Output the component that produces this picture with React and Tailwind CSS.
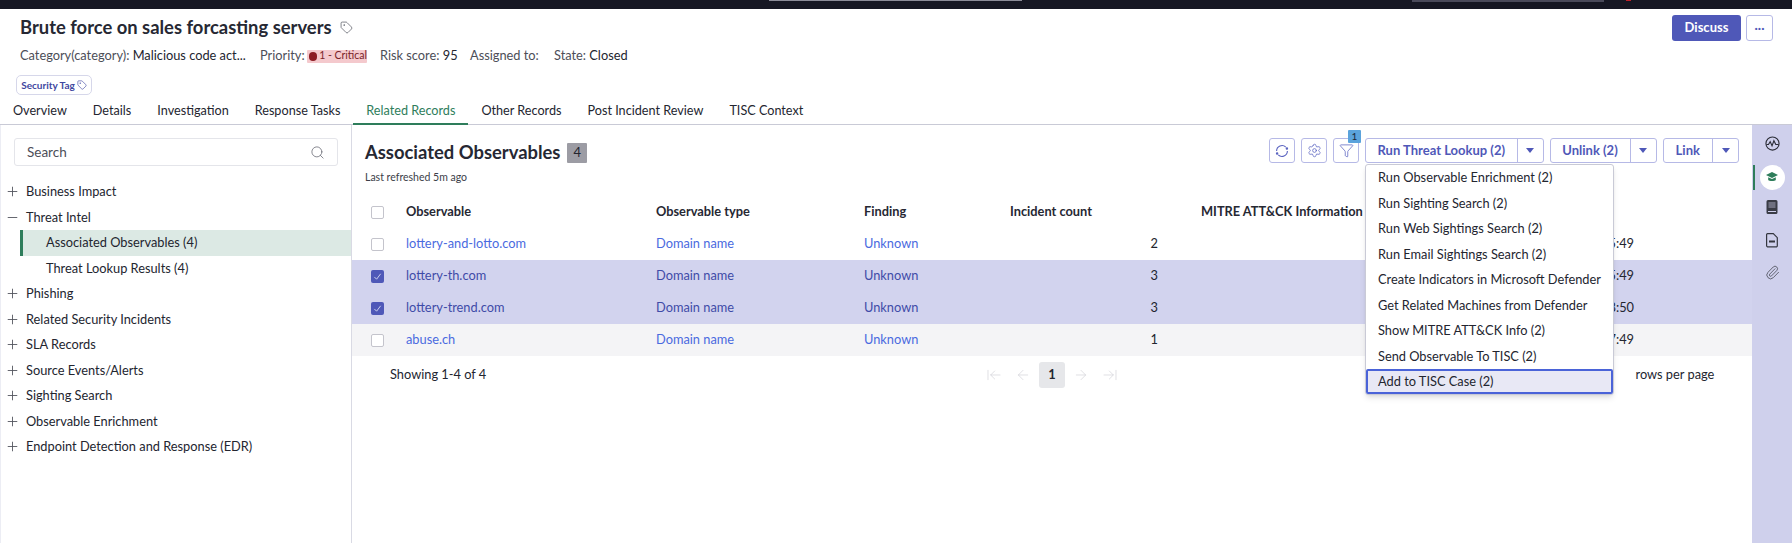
import {
  ArrowLeft,
  ArrowLeftToLine,
  ArrowRight,
  ArrowRightToLine,
  Filter,
  Minus,
  Paperclip,
  Plus,
  Search,
  Settings,
  Tag,
} from "lucide-react";

const tabs = ["Overview", "Details", "Investigation", "Response Tasks", "Related Records", "Other Records", "Post Incident Review", "TISC Context"];

const tree = [
  { label: "Business Impact", icon: "plus" },
  { label: "Threat Intel", icon: "minus" },
  { label: "Associated Observables (4)", child: true, active: true },
  { label: "Threat Lookup Results (4)", child: true },
  { label: "Phishing", icon: "plus" },
  { label: "Related Security Incidents", icon: "plus" },
  { label: "SLA Records", icon: "plus" },
  { label: "Source Events/Alerts", icon: "plus" },
  { label: "Sighting Search", icon: "plus" },
  { label: "Observable Enrichment", icon: "plus" },
  { label: "Endpoint Detection and Response (EDR)", icon: "plus" },
];

const rows = [
  { name: "lottery-and-lotto.com", count: 2, time: "5:49" },
  { name: "lottery-th.com", count: 3, time: "5:49", selected: true },
  { name: "lottery-trend.com", count: 3, time: "8:50", selected: true },
  { name: "abuse.ch", count: 1, time: "7:49", striped: true },
];

const menu = [
  "Run Observable Enrichment (2)",
  "Run Sighting Search (2)",
  "Run Web Sightings Search (2)",
  "Run Email Sightings Search (2)",
  "Create Indicators in Microsoft Defender",
  "Get Related Machines from Defender",
  "Show MITRE ATT&CK Info (2)",
  "Send Observable To TISC (2)",
];

const Checkbox = ({ checked }) =>
  checked ? (
    <span className="flex h-[13px] w-[13px] items-center justify-center rounded-[2px] bg-[#4f58b8]">
      <svg width="9" height="9" viewBox="0 0 10 10" fill="none" stroke="#d8daf2" strokeWidth="1">
        <path d="M1.5 5.5 4 8l4.5-6" />
      </svg>
    </span>
  ) : (
    <span className="h-[13px] w-[13px] rounded-[2px] border border-[#c4c4cc] bg-white" />
  );

const IconButton = ({ children }) => (
  <button className="flex h-[25px] w-[26px] items-center justify-center rounded-[3px] border border-[#b6b9e6] bg-white text-[#5a63c0]">
    {children}
  </button>
);

const SplitButton = ({ label, mainWidth, children }) => (
  <div className="relative flex h-[25px] rounded-[3px] border border-[#b6b9e6] bg-white text-[13px] font-bold whitespace-nowrap text-[#4f58b8]">
    <span className={`flex items-center justify-center border-r border-[#b6b9e6] ${mainWidth}`}>{label}</span>
    <span className="flex w-[25px] items-center justify-center">
      <span className="h-0 w-0 border-x-[4px] border-t-[5px] border-x-transparent border-t-[#4f58b8]" />
    </span>
    {children}
  </div>
);

export default function App() {
  return (
    <div className="flex h-screen flex-col overflow-hidden bg-white font-['Lato',sans-serif] text-[12.8px] whitespace-nowrap text-[#23252f]">
      <div className="relative h-[9px] shrink-0 bg-[#161723]">
        <span className="absolute left-[769px] top-0 h-[1px] w-[253px] bg-[#8c8c98]" />
        <span className="absolute left-[1412px] top-0 h-[2px] w-[192px] bg-[#4a4a5a]" />
        <span className="absolute left-[1626px] top-0 h-[1px] w-[5px] bg-[#c0212b]" />
      </div>

      <div className="flex h-[38px] shrink-0 items-center justify-between pl-[20px] pr-[19px]">
        <div className="flex items-center gap-[8px]">
          <h1 className="text-[18.4px] font-bold text-[#262833]">Brute force on sales forcasting servers</h1>
          <Tag size={13} strokeWidth={1.3} className="text-[#50525c]" />
        </div>
        <div className="flex items-center gap-[5px]">
          <button className="flex h-[26px] w-[69px] items-center justify-center rounded-[3px] bg-[#4f58b8] text-[13px] font-bold text-white">
            Discuss
          </button>
          <button className="flex h-[26px] w-[27px] items-center justify-center rounded-[3px] border border-[#b6b9e6] text-[12px] font-bold leading-none text-[#4f58b8]">
            ···
          </button>
        </div>
      </div>

      <div className="flex h-[18px] shrink-0 items-center pl-[20px] text-[#4c4e58]">
        <span className="w-[240px]">
          Category(category): <span className="text-[#23252f]">Malicious code act...</span>
        </span>
        <span className="w-[47px]">Priority:</span>
        <span className="flex h-[13px] w-[60px] items-center gap-[2px] rounded-[1px] bg-[#f4c9cd] pl-[2px] text-[10.5px] text-[#7a1f28]">
          <span className="h-[9px] w-[9px] rounded-full bg-[#8c1c24]" />1 - Critical
        </span>
        <span className="ml-[13px] w-[90px]">
          Risk score: <span className="text-[#23252f]">95</span>
        </span>
        <span className="w-[84px]">Assigned to:</span>
        <span>
          State: <span className="text-[#23252f]">Closed</span>
        </span>
      </div>

      <div className="mt-[10px] flex shrink-0 pl-[16px]">
        <span className="flex h-[20px] w-[76px] items-center justify-center gap-[2px] rounded-[5px] border border-[#d6d7ea] text-[10px] font-bold text-[#3f47a0]">
          Security Tag
          <Tag size={10} strokeWidth={1.5} />
        </span>
      </div>

      <div className="flex h-[30px] shrink-0 border-b border-[#c9cad6] text-[12.65px]">
        {tabs.map((tab) => (
          <div
            key={tab}
            className={
              tab === "Related Records"
                ? "-mb-[1px] border-b-2 border-[#2e7d5b] px-[13px] pt-[7px] text-[#2e7d5b]"
                : "px-[13px] pt-[7px]"
            }
          >
            {tab}
          </div>
        ))}
      </div>

      <div className="flex min-h-0 flex-1">
        <aside className="w-[352px] shrink-0 border-x border-x-[#d9dae4] border-l-[#eceDf4]">
          <div className="mx-[13px] mt-[13px] flex h-[28px] w-[324px] items-center justify-between rounded-[3px] border border-[#e4e5ea] pl-[12px] pr-[12px] text-[13.5px] text-[#4c4e58]">
            Search
            <Search size={15} strokeWidth={1.3} className="text-[#6c6e78]" />
          </div>
          <div className="mt-[13px]">
            {tree.map((item) => (
              <div
                key={item.label}
                className={
                  item.child
                    ? item.active
                      ? "ml-[19px] flex h-[25.5px] items-center border-l-[3px] border-[#2e7d5b] bg-[#dce9e4] pl-[23px]"
                      : "ml-[19px] flex h-[25.5px] items-center pl-[26px]"
                    : "flex h-[25.5px] items-center gap-[6px] pl-[4px]"
                }
              >
                {item.icon === "plus" && <Plus size={15} strokeWidth={1.4} className="text-[#50525c]" />}
                {item.icon === "minus" && <Minus size={15} strokeWidth={1.4} className="text-[#50525c]" />}
                {item.label}
              </div>
            ))}
          </div>
        </aside>

        <main className="min-w-0 flex-1">
          <div className="flex items-start justify-between pl-[13px] pr-[13px] pt-[13px]">
            <div className="pt-[5px]">
              <div className="flex h-[20px] items-center gap-[7px]">
                <h2 className="text-[18.4px] font-bold text-[#262833]">Associated Observables</h2>
                <span className="flex h-[20px] w-[20px] items-center justify-center rounded-[1px] bg-[#9c9ca4] text-[13px] text-[#23252f]">
                  4
                </span>
              </div>
              <p className="mt-[7px] text-[10.5px] leading-[14px] text-[#3c3e48]">Last refreshed 5m ago</p>
            </div>
            <div className="flex items-center gap-[6px]">
              <IconButton>
                <svg width="16" height="16" viewBox="0 0 16 16" fill="none" stroke="currentColor" strokeWidth="1.1">
                  <path d="M2.6 8a5.4 5.4 0 0 1 9.2-3.8" />
                  <path d="M13.4 8a5.4 5.4 0 0 1-9.2 3.8" />
                  <circle cx="12.9" cy="5.6" r=".7" fill="currentColor" />
                  <circle cx="3.1" cy="10.4" r=".7" fill="currentColor" />
                </svg>
              </IconButton>
              <IconButton>
                <Settings size={15} strokeWidth={1.2} />
              </IconButton>
              <div className="relative">
                <IconButton>
                  <Filter size={15} strokeWidth={1.2} />
                </IconButton>
                <span className="absolute -top-[8px] right-[-2px] flex h-[13px] w-[13px] items-center justify-center rounded-[1px] bg-[#5ba3dc] text-[10px] text-[#1d2a3a]">
                  1
                </span>
              </div>
              <SplitButton label="Run Threat Lookup (2)" mainWidth="w-[151.5px]">
                <div className="absolute left-[-1px] top-[25px] z-10 w-[249px] rounded-[3px] border border-[#c9cad6] bg-white text-[12.8px] font-normal text-[#23252f] shadow-md">
                  {menu.map((item) => (
                    <div key={item} className="flex h-[25.5px] items-center pl-[12px]">
                      {item}
                    </div>
                  ))}
                  <div className="flex h-[25px] items-center rounded-[2px] border-2 border-[#4a63d8] bg-[#e8e8f5] pl-[10px]">
                    Add to TISC Case (2)
                  </div>
                </div>
              </SplitButton>
              <SplitButton label="Unlink (2)" mainWidth="w-[80px]" />
              <SplitButton label="Link" mainWidth="w-[49.5px]" />
            </div>
          </div>

          <div className="mt-[12px]">
            <div className="grid h-[32px] grid-cols-[35px_250px_208px_146px_191px_1fr] items-center pl-[19px] font-bold text-[#262833]">
              <Checkbox />
              <span>Observable</span>
              <span>Observable type</span>
              <span>Finding</span>
              <span>Incident count</span>
              <span>MITRE ATT&amp;CK Information</span>
            </div>
            {rows.map((row) => (
              <div
                key={row.name}
                className={
                  row.selected
                    ? "grid h-[32px] grid-cols-[35px_250px_208px_146px_191px_1fr] items-center bg-[#d2d3ee] pl-[19px] text-[#3f4ba8]"
                    : row.striped
                      ? "grid h-[32px] grid-cols-[35px_250px_208px_146px_191px_1fr] items-center bg-[#f4f4f6] pl-[19px] text-[#4a6ae0]"
                      : "grid h-[32px] grid-cols-[35px_250px_208px_146px_191px_1fr] items-center pl-[19px] text-[#4a6ae0]"
                }
              >
                <Checkbox checked={row.selected} />
                <span>{row.name}</span>
                <span>Domain name</span>
                <span>Unknown</span>
                <span className="pr-[43px] text-right text-[#23252f]">{row.count}</span>
                <span className="pr-[118px] text-right text-[#23252f]">{row.time}</span>
              </div>
            ))}
          </div>

          <div className="mt-[6px] flex h-[26px] items-center pl-[38px]">
            <span className="w-[589.5px]">Showing 1-4 of 4</span>
            <span className="flex w-[29px] justify-center text-[#d4d5da]">
              <ArrowLeftToLine size={16} strokeWidth={1.1} />
            </span>
            <span className="flex w-[29px] justify-center text-[#d4d5da]">
              <ArrowLeft size={16} strokeWidth={1.1} />
            </span>
            <span className="mx-[1.5px] flex h-[26px] w-[26px] items-center justify-center rounded-[3px] bg-[#e6e7ea] font-bold">
              1
            </span>
            <span className="flex w-[29px] justify-center text-[#d4d5da]">
              <ArrowRight size={16} strokeWidth={1.1} />
            </span>
            <span className="flex w-[29px] justify-center text-[#d4d5da]">
              <ArrowRightToLine size={16} strokeWidth={1.1} />
            </span>
            <span className="pl-[511px]">rows per page</span>
          </div>
        </main>

        <nav className="flex w-[40px] shrink-0 flex-col items-center bg-[#cfd0ec] pt-[11px]">
          <svg width="15" height="15" viewBox="0 0 16 16" fill="none" stroke="#2a2c36" strokeWidth="1.2">
            <circle cx="8" cy="8" r="7" />
            <path d="M1.5 9h2.2L5.5 6l2 4.5L9.5 5l2 4h3" />
          </svg>
          <div className="relative mt-[13.5px] flex h-[25px] w-full items-center justify-center">
            <span className="absolute left-[1px] top-0 h-[25px] w-[2px] bg-[#2e7d5b]" />
            <span className="flex h-[25px] w-[25px] items-center justify-center rounded-full bg-white">
              <svg width="12" height="10" viewBox="0 0 12 10" fill="#2e7d5b">
                <path d="M6 0 12 3 6 6 0 3z" />
                <path d="M2.2 5.2 6 7.1l3.8-1.9V8C8.8 9.4 3.2 9.4 2.2 8z" />
              </svg>
            </span>
          </div>
          <svg className="mt-[10.5px]" width="12" height="14" viewBox="0 0 12 14">
            <path d="M2 0h8a1.5 1.5 0 0 1 1.5 1.5v11A1.5 1.5 0 0 1 10 14H2a1.5 1.5 0 0 1-1.5-1.5v-11A1.5 1.5 0 0 1 2 0z" fill="#3a3c46" />
            <rect x="2.5" y="2" width="7" height="6" fill="#6f7080" />
            <rect x="2" y="11" width="8" height="1" fill="#cfd0ec" />
          </svg>
          <svg className="mt-[18.5px]" width="12" height="15" viewBox="0 0 12 15" fill="none" stroke="#34363f" strokeWidth="1.2">
            <path d="M1.5.7h5.8l4 4v8a1.2 1.2 0 0 1-1.2 1.2H1.5A1.2 1.2 0 0 1 .6 12.7V1.6A1 1 0 0 1 1.5.7z" />
            <path d="M3 8.5h6" strokeWidth="2" />
          </svg>
          <Paperclip size={15} strokeWidth={1.3} className="mt-[17px] text-[#4a4c58]" />
        </nav>
      </div>
    </div>
  );
}
